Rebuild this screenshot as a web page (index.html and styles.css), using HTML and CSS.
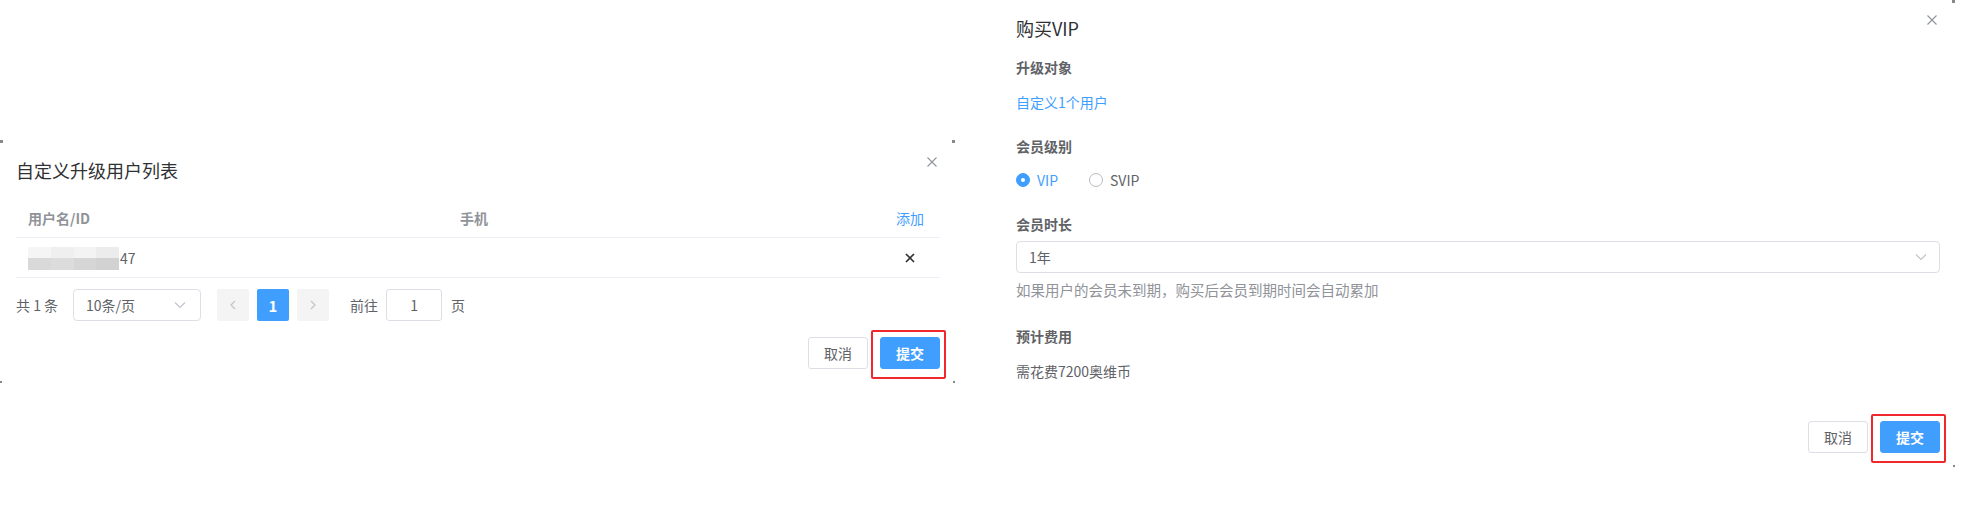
FILE: index.html
```html
<!DOCTYPE html>
<html lang="zh-CN">
<head>
<meta charset="utf-8">
<title>购买VIP</title>
<link rel="stylesheet" href="styles.css">
</head>
<body>
<div class="page">
  <section class="panel panel-left">
    <i class="mark tl"></i><i class="mark tr"></i><i class="mark bl"></i><i class="mark br"></i>
    <div class="dlg-head">
      <h2 class="dlg-title">自定义升级用户列表</h2>
      <svg class="close" viewBox="0 0 10 10"><path d="M0.5 0.5L9.5 9.5M9.5 0.5L0.5 9.5"/></svg>
    </div>
    <div class="table">
      <div class="trow thead">
        <div class="cell">用户名/ID</div>
        <div class="cell">手机</div>
        <div class="cell c-act link">添加</div>
      </div>
      <div class="trow tbody">
        <div class="cell"><span class="blur"><i class="b1"></i><i class="b2"></i><i class="b3"></i><i class="b4"></i><i class="b5"></i><i class="b6"></i><i class="b7"></i><i class="b8"></i></span><span class="uid">47</span></div>
        <div class="cell"></div>
        <div class="cell c-act"><svg class="del" viewBox="0 0 10 10"><path d="M1 1L9 9M9 1L1 9"/></svg></div>
      </div>
    </div>
    <div class="pager">
      <span class="total">共 1 条</span>
      <div class="sizes"><span>10条/页</span><svg class="chev" viewBox="0 0 12 8"><path d="M1 1.5L6 6.5L11 1.5"/></svg></div>
      <button class="pbtn"><svg viewBox="0 0 6 10"><path d="M5 1L1 5L5 9"/></svg></button>
      <button class="pbtn active">1</button>
      <button class="pbtn"><svg viewBox="0 0 6 10"><path d="M1 1L5 5L1 9"/></svg></button>
      <span class="goto">前往</span>
      <div class="jump">1</div>
      <span class="page-unit">页</span>
    </div>
    <div class="footer">
      <button class="btn">取消</button>
      <button class="btn primary">提交<span class="hl"></span></button>
    </div>
  </section>

  <section class="panel panel-right">
    <i class="mark tr"></i><i class="mark br"></i>
    <div class="dlg-head head-r">
      <h2 class="dlg-title">购买VIP</h2>
      <svg class="close" viewBox="0 0 10 10"><path d="M0.5 0.5L9.5 9.5M9.5 0.5L0.5 9.5"/></svg>
    </div>
    <div class="label l1">升级对象</div>
    <div class="value link v1">自定义1个用户</div>
    <div class="label l2">会员级别</div>
    <div class="radios">
      <label class="radio on"><span class="circle"></span><span>VIP</span></label>
      <label class="radio"><span class="circle"></span><span>SVIP</span></label>
    </div>
    <div class="label l3">会员时长</div>
    <div class="select"><span>1年</span><svg class="chev" viewBox="0 0 12 8"><path d="M1 1.5L6 6.5L11 1.5"/></svg></div>
    <div class="hint">如果用户的会员未到期，购买后会员到期时间会自动累加</div>
    <div class="label l4">预计费用</div>
    <div class="value v2">需花费7200奥维币</div>
    <div class="footer footer-r">
      <button class="btn">取消</button>
      <button class="btn primary">提交<span class="hl"></span></button>
    </div>
  </section>
</div>
</body>
</html>
```
FILE: styles.css
```css
* { box-sizing: border-box; }
html, body { margin: 0; padding: 0; background: #fff; }
body {
  width: 1971px;
  height: 511px;
  overflow: hidden;
  font-family: "Noto Sans CJK SC", "Noto Sans", sans-serif;
  font-size: 14px;
  color: #606266;
}
.page {
  display: flex;
  align-items: flex-start;
  gap: 45px;
}
.panel {
  position: relative;
  width: 955px;
  background: #fff;
  padding: 0 15px 14px 16px;
}
.panel-left { margin-top: 140px; }

.mark { position: absolute; width: 3px; height: 3px; background: #888; }
.mark.tl { left: 0; top: 0; }
.mark.tr { right: 0; top: 0; }
.mark.bl { left: 0; bottom: 0; width: 2px; height: 2px; }
.mark.br { right: 0; bottom: 0; width: 2px; height: 2px; }

.dlg-head {
  position: relative;
  padding-top: 18px;
}
.head-r { padding-top: 16px; }
.dlg-title {
  margin: 0;
  font-size: 18px;
  line-height: 24px;
  font-weight: 400;
  color: #303133;
}
.close {
  position: absolute;
  right: 3px;
  width: 10px;
  height: 10px;
  fill: none;
  stroke: #909399;
  stroke-width: 1.1;
}
.panel-left .close { top: 17px; }
.panel-right .close { top: 15px; }

.link { color: #409eff; }

.table { margin-top: 16px; }
.trow {
  display: grid;
  grid-template-columns: 432px 436px 52px;
  height: 40px;
  align-items: center;
  border-bottom: 1px solid #ebeef5;
}
.cell { padding-left: 12px; line-height: 20px; display: flex; align-items: center; }
.thead .cell { font-weight: 700; color: #909399; }
.thead .cell.link { color: #409eff; font-weight: 400; }
.c-act { padding-left: 0; justify-content: center; }
.tbody .cell { color: #606266; }
.blur {
  display: grid;
  grid-template-columns: repeat(4, 1fr);
  grid-template-rows: 11px 12px;
  width: 91px;
  height: 23px;
  margin-top: 2px;
}
.blur i { display: block; }
.b1 { background: #f5f5f5; }
.b2 { background: #efefef; }
.b3 { background: #f3f3f3; }
.b4 { background: #ececec; }
.b5 { background: #d9d9d9; }
.b6 { background: #dcdcdc; }
.b7 { background: #d6d6d6; }
.b8 { background: #d2d2d2; }
.uid { color: #606266; margin-left: 1px; }
.del {
  width: 10px;
  height: 10px;
  fill: none;
  stroke: #303133;
  stroke-width: 1.7;
}

.pager {
  display: flex;
  align-items: center;
  height: 32px;
  margin-top: 11px;
  font-size: 13px;
  color: #606266;
}
.total { margin-right: 15px; font-size: 14px; }
.sizes, .select {
  display: flex;
  align-items: center;
  justify-content: space-between;
  border: 1px solid #dcdfe6;
  border-radius: 4px;
  height: 32px;
  color: #606266;
}
.sizes {
  width: 128px;
  padding: 0 14px 0 12px;
  margin-right: 16px;
  font-size: 14px;
}
.chev {
  width: 12px;
  height: 8px;
  fill: none;
  stroke: #c0c4cc;
  stroke-width: 1.2;
}
.pbtn {
  width: 32px;
  height: 32px;
  margin-right: 8px;
  border: 0;
  border-radius: 2px;
  background: #f4f4f5;
  padding: 0;
  display: flex;
  align-items: center;
  justify-content: center;
  font-family: inherit;
}
.pbtn svg { width: 6px; height: 10px; fill: none; stroke: #c0c4cc; stroke-width: 1.2; }
.pbtn.active {
  background: #409eff;
  color: #fff;
  font-weight: 700;
  font-size: 15px;
}
.pbtn:last-of-type { margin-right: 0; }
.goto { margin-left: 21px; margin-right: 8px; font-size: 14px; }
.jump {
  width: 56px;
  height: 32px;
  border: 1px solid #dcdfe6;
  border-radius: 3px;
  display: flex;
  align-items: center;
  justify-content: center;
  font-size: 14px;
}
.page-unit { margin-left: 9px; font-size: 14px; }

.footer {
  display: flex;
  justify-content: flex-end;
  gap: 12px;
  margin-top: 16px;
}
.footer-r { margin-top: 40px; }
.btn {
  position: relative;
  width: 60px;
  height: 32px;
  border: 1px solid #dcdfe6;
  border-radius: 3px;
  background: #fff;
  color: #606266;
  font-family: inherit;
  font-size: 14px;
  padding: 0;
}
.btn.primary {
  background: #409eff;
  border-color: #409eff;
  color: #fff;
  font-weight: 700;
}
.hl {
  position: absolute;
  left: -10px;
  top: -8px;
  right: -7px;
  bottom: -11px;
  border: 2px solid #f0282d;
  border-radius: 2px;
}

.label {
  font-weight: 700;
  line-height: 20px;
  color: #606266;
}
.value { line-height: 20px; }
.l1 { margin-top: 17px; }
.v1 { margin-top: 15px; }
.l2 { margin-top: 24px; }
.radios {
  display: flex;
  align-items: center;
  height: 20px;
  margin-top: 14px;
}
.radio {
  display: flex;
  align-items: center;
  gap: 7px;
  margin-right: 31px;
  color: #606266;
}
.circle {
  width: 14px;
  height: 14px;
  border-radius: 50%;
  border: 1px solid #b8bcc4;
  background: #fff;
  position: relative;
}
.radio.on { color: #409eff; }
.radio.on .circle { background: #409eff; border-color: #409eff; }
.radio.on .circle::after {
  content: "";
  position: absolute;
  left: 4px;
  top: 4px;
  width: 4px;
  height: 4px;
  border-radius: 50%;
  background: #fff;
}
.l3 { margin-top: 24px; }
.select {
  margin-top: 7px;
  width: 924px;
  padding: 0 12px 0 12px;
  font-size: 14px;
}
.hint {
  margin-top: 7px;
  line-height: 20px;
  color: #909399;
  font-size: 14.5px;
}
.l4 { margin-top: 26px; }
.v2 { margin-top: 15px; }
```
